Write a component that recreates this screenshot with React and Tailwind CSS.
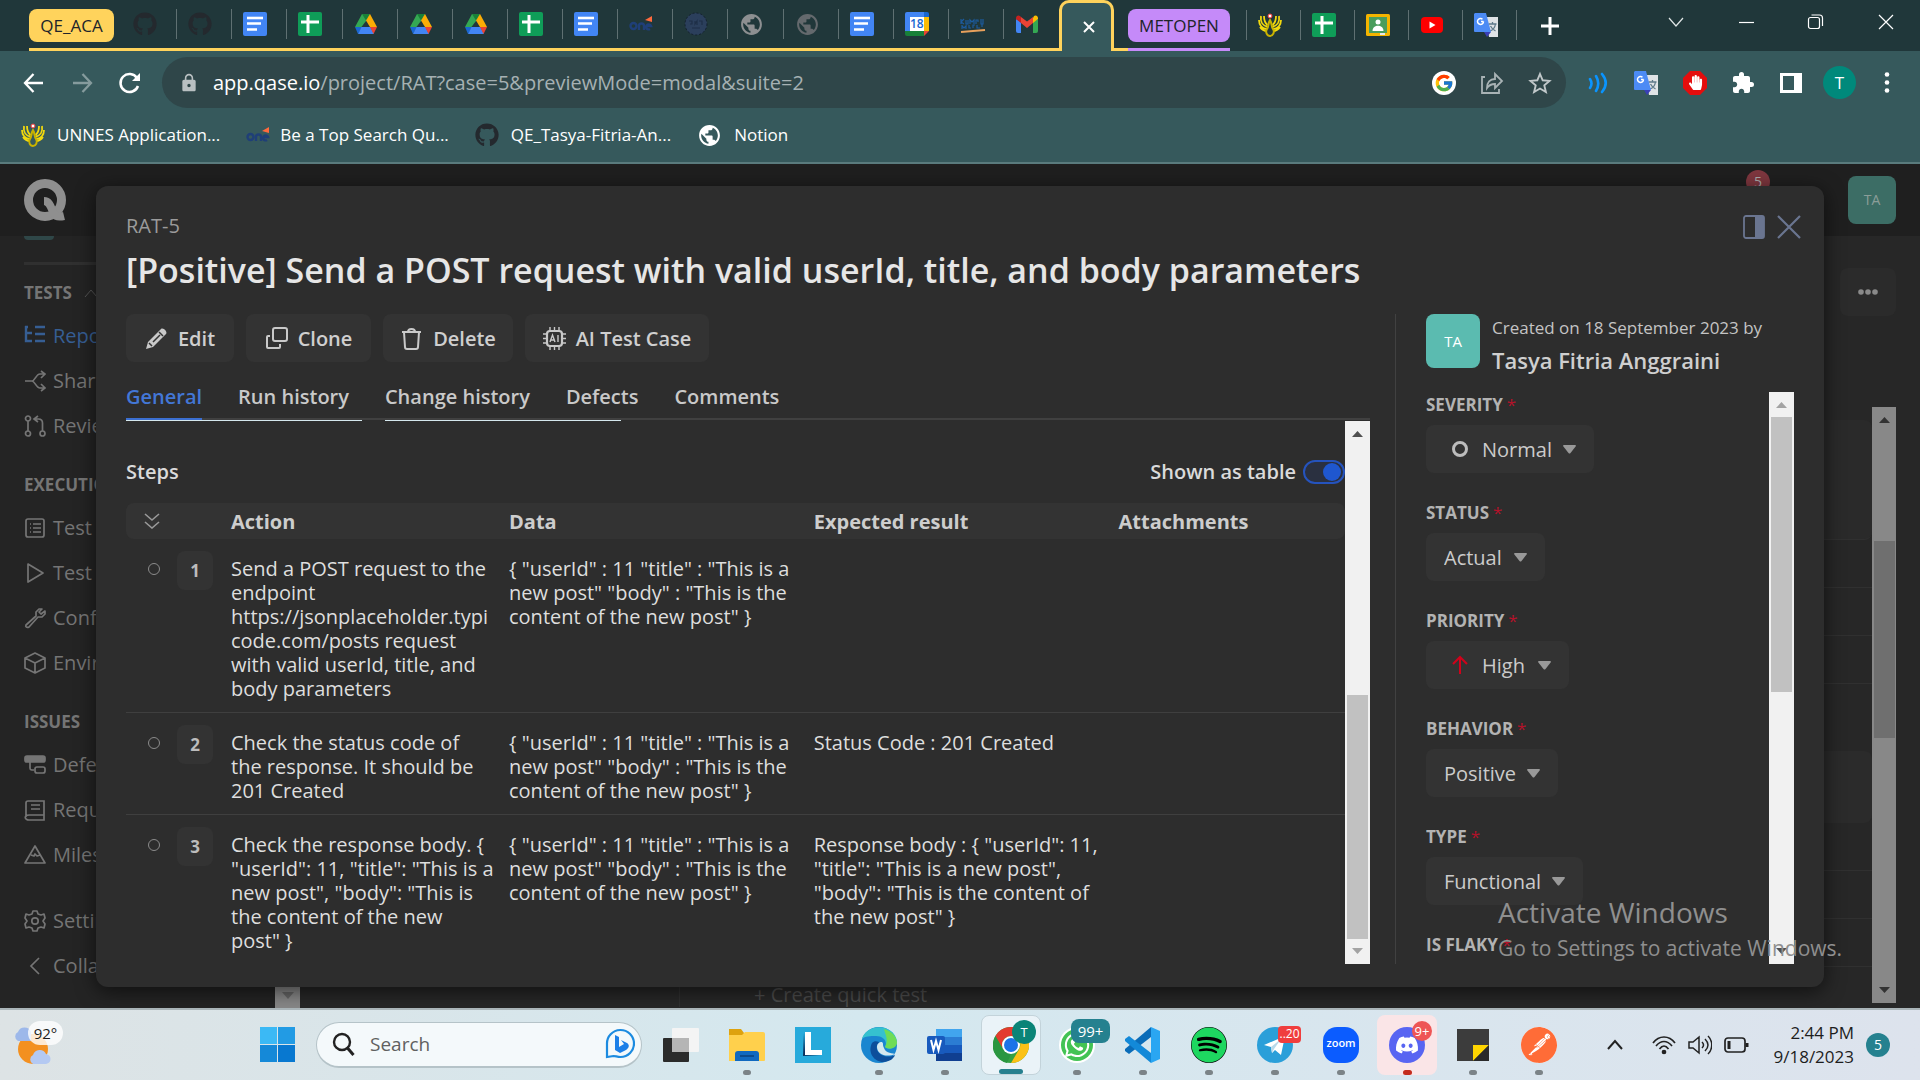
import React from "react";
import { FaGithub, FaSpotify, FaDiscord, FaWhatsapp, FaHandPaper } from "react-icons/fa";
import { FcGoogle } from "react-icons/fc";
import { MdPublic, MdExtension, MdLock } from "react-icons/md";
import { SiPostman } from "react-icons/si";

/* ---------- favicons ---------- */

const Docs = () => (
  <svg width="24" height="24" viewBox="0 0 24 24">
    <rect width="24" height="24" rx="2" fill="#4285f4" />
    <path d="M4 6h16" stroke="#fff" strokeWidth="2.6" />
    <path d="M4 11.500h14M4 17.500h10" stroke="#fff" strokeWidth="2.6" />
  </svg>
);
const Sheets = () => (
  <svg width="24" height="24" viewBox="0 0 24 24">
    <rect width="24" height="24" rx="2" fill="#0f9d58" />
    <path d="M3 10h18M10 3v18" stroke="#fff" strokeWidth="3" />
  </svg>
);
const Drive = () => (
  <svg width="24" height="24" viewBox="0 0 24 24">
    <path d="M8 2h8l-4 7-4.600 6L1 15z" fill="#34a853" />
    <path d="M8 2h8l-4 6.500z" fill="#188038" />
    <path d="M16 2l7 13h-7l-4-6.500z" fill="#fbad05" />
    <path d="M1 15h7l-4 7z" fill="#1967d2" />
    <path d="M7.500 15h9l3.500 7H4z" fill="#4285f4" />
    <path d="M16 15h7l-3.500 7z" fill="#ea4335" />
  </svg>
);
const One = () => (
  <svg width="24" height="24" viewBox="0 0 24 24" fill="none" stroke="#1f3f78" strokeWidth="2.400">
    <circle cx="4.500" cy="14" r="3" />
    <path d="M10 18v-4a2.500 2.500 0 015 0v4M17 14h5a2.500 2.500 0 10-1 3" />
    <path d="M16 8l7-4v6z" fill="#ff6a3d" stroke="none" />
  </svg>
);
const Seal = () => (
  <svg width="24" height="24" viewBox="0 0 24 24">
    <circle cx="12" cy="12" r="11" fill="#2b3f5c" stroke="#14202e" strokeDasharray="2 2" />
    <path d="M5 9h3v3H6m5-3v3l2-3v4m2-4h3v4M8 16h8" stroke="#1e2f47" fill="none" strokeWidth="1.200" />
  </svg>
);
const Calendar = () => (
  <span className="relative flex h-6 w-6 items-center justify-center">
    <svg className="absolute inset-0" width="24" height="24" viewBox="0 0 24 24">
      <path d="M2 0h17v5H5v14H0V2a2 2 0 012-2z" fill="#4285f4" />
      <path d="M19 0h3a2 2 0 012 2v3h-5z" fill="#1967d2" />
      <path d="M19 5h5v14h-5z" fill="#fbbc04" />
      <path d="M0 19h19v5H2a2 2 0 01-2-2z" fill="#188038" />
      <path d="M19 19h5l-5 5z" fill="#ea4335" />
      <path d="M5 5h14v14H5z" fill="#fff" />
    </svg>
    <span className="relative text-xs font-semibold text-[#1967d2]">18</span>
  </span>
);
const Kampus = () => (
  <svg width="26" height="24" viewBox="0 0 26 24" fill="none">
    <path d="M1 7v5m0-2l3-3m-3 3l3 2m2-4v4h2V8m2 4V8l2 2 2-2v4m2 0V8h2v2m3-3v5h2V7M2 13v4m0-3l2 2 2-2v3m3-4v3h2m2 0v-3h2m2 0v3h3m2-4v3" stroke="#1c5b9e" strokeWidth="1.200" />
    <path d="M1 20l24-2" stroke="#e8a05c" strokeWidth="2.200" />
  </svg>
);
const Gmail = () => (
  <svg width="24" height="24" viewBox="0 0 24 24">
    <path d="M1 7v12a2 2 0 002 2h3V10z" fill="#4285f4" />
    <path d="M23 7v12a2 2 0 01-2 2h-3V10z" fill="#34a853" />
    <path d="M18 6v5l5-4V6a2.500 2.500 0 00-4-2z" fill="#fbbc04" />
    <path d="M6 11L1 7V6a2.500 2.500 0 014-2l1 1z" fill="#c5221f" />
    <path d="M6 5l6 4.500L18 5v6l-6 5-6-5z" fill="#ea4335" />
  </svg>
);
const Unnes = () => (
  <svg width="24" height="24" viewBox="0 0 24 24" fill="none" stroke="#f2d90e" strokeWidth="1.800">
    <path d="M10 14C5 13 2 9 3 3M9 16C4 16 1 12 1 7M9 18c-3 0-5-1-7-4M9.500 12C7 10 6 7 6 3" />
    <path d="M14 14c5-1 8-5 7-11M15 16c5 0 8-4 8-9M15 18c3 0 5-1 7-4M14.500 12C17 10 18 7 18 3" />
    <path d="M12 7c-2 3-1 6-3 9s0 7 3 7 5-4 3-7-1-6-3-9z" stroke="#c9b300" strokeWidth="2" />
    <circle cx="12" cy="3" r="2" fill="#fff" stroke="#e33" strokeWidth="1" />
  </svg>
);
const Classroom = () => (
  <svg width="24" height="24" viewBox="0 0 24 24">
    <rect y="1" width="24" height="22" rx="1.500" fill="#f4b400" />
    <rect x="3" y="4" width="18" height="16" fill="#4a9d5c" />
    <circle cx="12" cy="9" r="2.500" fill="#fff" />
    <path d="M6.500 18c0-7 11-7 11 0z" fill="#fff" />
    <path d="M14 20h5v2h-5z" fill="#e8e8e8" />
  </svg>
);
const Youtube = () => (
  <svg width="24" height="24" viewBox="0 0 24 24">
    <rect x="1" y="4" width="22" height="16" rx="4" fill="#f00" />
    <path d="M9.500 8.500v7l6-3.500z" fill="#fff" />
  </svg>
);
const Translate = () => (
  <svg width="25" height="24" viewBox="0 0 25 24">
    <path d="M11 4h13v20H15z" fill="#dfe3e6" />
    <path d="M14.500 11h8M18.500 9v2M16 18c3-1 5-4 5.500-7M16.500 13c1 2 3 4 5 5" stroke="#5f7a8a" strokeWidth="1.300" fill="none" />
    <path d="M1 0h11l5 19H1a1 1 0 01-1-1V1z" fill="#4c8bf5" />
    <path d="M10 19h7l-4 5z" fill="#3a3fb5" />
    <path d="M9.500 8.500H7M9.500 8.500a3 3 0 11-1-2.300" stroke="#fff" strokeWidth="1.500" fill="none" />
  </svg>
);
const Github = () => <FaGithub className="h-6 w-6 text-[#24292e]" />;
const GlobeLight = () => <MdPublic className="h-[25px] w-[25px] text-[#8d8f91]" />;
const GlobeDim = () => <MdPublic className="h-[25px] w-[25px] text-[#64696d]" />;

const groupTabs = [Github, Github, Docs, Sheets, Drive, Drive, Drive, Sheets, Docs, One, Seal, GlobeLight, GlobeDim, Docs, Calendar, Kampus, Gmail];
const otherTabs = [Unnes, Sheets, Classroom, Youtube, Translate];

function BrowserTab({ Icon, last }) {
  return (
    <button aria-label="Tab" className="flex min-w-0 flex-1 items-center">
      <span className="flex flex-1 items-center pl-[11px]"><Icon /></span>
      {!last && <span className="h-[30px] w-px bg-[#5f7072]" />}
    </button>
  );
}

function Browser() {
  return (
    <header className="shrink-0 border-b-2 border-[#5a7b7d] bg-[#36595c] text-white">
      <div className="flex h-[51px] bg-[#20373a]">
        <div className="ml-[29px] flex min-w-0 flex-[1030_1_0] border-b-[3px] border-[#ffd35c]">
          <button className="mr-2 mt-[9px] h-[33px] w-[85px] shrink-0 rounded-lg bg-[#ffd35c] text-[17px] text-[#20242a]">QE_ACA</button>
          {groupTabs.map((I, i) => <BrowserTab key={i} Icon={I} last={i === groupTabs.length - 1} />)}
        </div>
        <div className="relative flex w-[55px] shrink-0 items-center justify-center rounded-t-[10px] border-x-[3px] border-t-[3px] border-[#ffd35c] bg-[#36595c] pl-1">
          <button aria-label="Close tab" className="flex h-5 w-5 items-center justify-center">
            <svg width="14" height="14" viewBox="0 0 14 14"><path d="M2 2l10 10M12 2L2 12" stroke="#fff" strokeWidth="2" /></svg>
          </button>
        </div>
        <div className="w-[14px] shrink-0 border-b-[3px] border-[#ffd35c]" />
        <div className="w-[102px] shrink-0 border-b-[3px] border-[#c58af9]">
          <button className="mt-[9px] h-[33px] w-full rounded-lg bg-[#c58af9] text-[17px] text-[#20242a]">METOPEN</button>
        </div>
        <div className="flex w-[287px] shrink-0 items-center pb-px pl-4">
          <span className="h-[30px] w-px bg-[#5f7072]" />
          {otherTabs.map((I, i) => <BrowserTab key={i} Icon={I} />)}
        </div>
        <div className="flex flex-[403_1_0] items-center">
          <button aria-label="New tab" className="ml-6 h-5 w-5">
            <svg width="18" height="18" viewBox="0 0 18 18"><path d="M9 0v18M0 9h18" stroke="#fff" strokeWidth="3" /></svg>
          </button>
          <div className="mb-2 ml-auto mr-6 flex items-center gap-[50px]">
            <button aria-label="Search tabs"><svg width="20" height="20" viewBox="0 0 20 20"><path d="M3 6l7 8 7-8" fill="none" stroke="#dfe6e6" strokeWidth="1.200" /></svg></button>
            <button aria-label="Minimize"><svg width="20" height="20" viewBox="0 0 20 20"><path d="M3 10.500h15" stroke="#fff" strokeWidth="1.200" /></svg></button>
            <button aria-label="Restore"><svg width="20" height="20" viewBox="0 0 20 20" fill="none" stroke="#fff" strokeWidth="1.200"><rect x="2.500" y="5.500" width="11" height="11" rx="2" /><path d="M5.500 3h8a3 3 0 013 3v8" /></svg></button>
            <button aria-label="Close"><svg width="20" height="20" viewBox="0 0 20 20"><path d="M3 3l14 14M17 3L3 17" stroke="#fff" strokeWidth="1.200" /></svg></button>
          </div>
        </div>
      </div>

      <div className="mt-[6px] flex h-[51px] items-center pl-[22px] pr-[21px]">
        <div className="flex w-[140px] shrink-0 items-center gap-6">
          <button aria-label="Back"><svg width="24" height="24" viewBox="0 0 24 24" fill="none" stroke="#fff" strokeWidth="2.300"><path d="M21 12H3M11.500 3L3 12l8.500 9" /></svg></button>
          <button aria-label="Forward"><svg width="24" height="24" viewBox="0 0 24 24" fill="none" stroke="#859b9d" strokeWidth="2.300"><path d="M3 12h18M12.500 3l8.500 9-8.500 9" /></svg></button>
          <button aria-label="Reload"><svg width="24" height="24" viewBox="0 0 24 24" fill="none" stroke="#fff" strokeWidth="2.500"><path d="M20 15a9 9 0 11-1-8l2 2" /><path d="M22 2v8h-8z" fill="#fff" stroke="none" /></svg></button>
        </div>
        <div className="flex h-full flex-1 items-center rounded-full bg-[#2f4649] pl-[17px] pr-[14px]">
          <MdLock className="h-5 w-5 text-[#b9c0c2]" />
          <label htmlFor="url" className="ml-[14px] text-[20px]">app.qase.io</label>
          <input id="url" aria-label="Address" defaultValue="/project/RAT?case=5&previewMode=modal&suite=2" className="min-w-0 flex-1 bg-transparent text-[20px] text-[#a6b1b3] outline-none" />
          <div className="flex items-center gap-6">
            <button aria-label="Google" className="flex h-6 w-6 items-center justify-center rounded-full bg-white"><FcGoogle className="h-5 w-5" /></button>
            <button aria-label="Share"><svg width="24" height="24" viewBox="0 0 24 24" fill="none" stroke="#a9b3b5" strokeWidth="1.800"><path d="M5 6H2v16h17v-4" /><path d="M7 17c0-6 3-9 8-9V3l7 7-7 7v-4c-4 0-6 1-8 4z" /></svg></button>
            <button aria-label="Bookmark"><svg width="24" height="24" viewBox="0 0 24 24" fill="none" stroke="#c1c8ca" strokeWidth="1.900"><path d="M12 3l2.700 6.300 6.800.600-5.200 4.500 1.600 6.700-5.900-3.600-5.900 3.600 1.600-6.700L2.500 9.900l6.800-.600z" /></svg></button>
          </div>
        </div>
        <div className="ml-5 flex items-center gap-6">
          <button aria-label="Audio"><svg width="24" height="24" viewBox="0 0 24 24" fill="none" stroke="#0a94ff" strokeWidth="2.600" strokeLinecap="round"><path d="M4 8c2 3 2 6 0 9M10 5c3 5 3 10 0 15M16 3c5 6 5 12 0 18" /></svg></button>
          <button aria-label="Translate"><Translate /></button>
          <button aria-label="AdBlock"><svg width="24" height="24" viewBox="0 0 24 24"><path d="M7 0h10l7 7v10l-7 7H7l-7-7V7z" fill="#e40d0d" /><g transform="translate(5 4)"><FaHandPaper size={15} color="#fff" /></g></svg></button>
          <button aria-label="Extensions"><MdExtension className="h-6 w-6" /></button>
          <button aria-label="Side panel"><svg width="24" height="24" viewBox="0 0 24 24"><path d="M1 2h22v20H1zM4 5v14h11V5z" fill="#fff" fillRule="evenodd" /></svg></button>
          <button className="-ml-1 -mr-[5px] h-[33px] w-[33px] rounded-full bg-[#00897b] text-[17px]">T</button>
          <button aria-label="Menu"><svg width="24" height="24" viewBox="0 0 24 24" fill="#fff"><circle cx="12" cy="3.500" r="2.300" /><circle cx="12" cy="11.500" r="2.300" /><circle cx="12" cy="19.500" r="2.300" /></svg></button>
        </div>
      </div>

      <nav className="flex h-[54px] items-center gap-[26px] pl-[21px] text-[17px]">
        <a href="#unnes" className="flex items-center gap-3"><Unnes />UNNES Application...</a>
        <a href="#search" className="flex items-center gap-[10px]"><One />Be a Top Search Qu...</a>
        <a href="#repo" className="flex items-center gap-3"><Github />QE_Tasya-Fitria-An...</a>
        <a href="#notion" className="flex items-center gap-3"><MdPublic className="h-[25px] w-[25px]" />Notion</a>
      </nav>
    </header>
  );
}

/* ---------- page behind the dialog ---------- */

const sideIcons = {
  repo: <path d="M2 1v15h5M2 8h5M11 2h10M11 9h10M11 16h10M6 8h2M6 16h2M1 2h3" strokeWidth="2.400" />,
  share: <path d="M1 11h7c3 0 4-7 8-7h4M17 1l4 3-4 4M8 11c3 0 4 7 8 7h4M17 14l4 4-4 3" />,
  review: <><circle cx="4" cy="3.500" r="2.500" /><circle cx="4" cy="18.500" r="2.500" /><circle cx="18.500" cy="18.500" r="2.500" /><path d="M4 6v10M18.500 16V8c0-3-2-4-4-4h-3M14 1l-4 3 4 3" /></>,
  plans: <><rect x="2" y="2" width="18" height="18" rx="2" /><path d="M6 7h1M9 7h8M6 11h1M9 11h8M6 15h1M9 15h8" /></>,
  play: <path d="M4 2l15 9-15 9z" strokeLinejoin="round" />,
  wrench: <path d="M15 2l-3 3v4l-10 9c-1 2 1 3 3 2l9-10h4l3-3V4l-4 3-2-2 3-3z" strokeLinejoin="round" />,
  box: <path d="M11 1l10 5v10l-10 5L1 16V6zM1 6l10 5 10-5M11 11v10" strokeLinejoin="round" />,
  defects: <><rect x="1" y="2" width="20" height="6" rx="2" fill="currentColor" /><path d="M6 8v6c0 2 1 2 4 2" /><rect x="11" y="13" width="10" height="6" rx="2" /></>,
  book: <path d="M20 16H5a3 2 0 000 5h15V2H4a2 2 0 00-2 2v14M7 6h9M7 10h9" />,
  mile: <path d="M11 2l10 17H1zM7 11l3 1 1-2 2 2 3-1" strokeLinejoin="round" />,
  gear: <><circle cx="11" cy="11" r="3.200" /><path d="M9 1h4l1 3 3 1 3-1 1 4-2 3 2 3-1 4-3-1-3 1-1 3H9l-1-3-3-1-3 1-1-4 2-3-2-3 1-4 3 1 3-1z" strokeLinejoin="round" /></>,
  left: <path d="M15 3l-8 8 8 8" />,
};

function SideItem({ icon, active, children, className = "h-[45px]" }) {
  return (
    <a href="#side" className={`flex items-center gap-[7px] ${className} ${active ? "text-[#365e93]" : "text-[#757575]"}`}>
      <svg width="22" height="22" viewBox="0 0 22 22" fill="none" stroke="currentColor" strokeWidth="1.700">{sideIcons[icon]}</svg>
      {children}
    </a>
  );
}

function Backdrop() {
  return (
    <>
      <div className="flex h-[72px] items-center justify-between bg-[#1f1f1f] pl-6 pr-6">
        <svg width="42" height="43" viewBox="0 0 42 43" fill="none" stroke="#8f8f8f">
          <circle cx="21" cy="21" r="16.500" strokeWidth="9" />
          <path d="M20 22c6 0 7 7 10 13 2 3 6 3 10 2" strokeWidth="8" />
        </svg>
        <div className="flex items-start gap-[78px]">
          <span className="-mt-[6px] flex h-6 w-6 items-center justify-center rounded-full bg-[#7f373f] text-sm text-[#aaa]">5</span>
          <button className="h-12 w-12 rounded-lg bg-[#3c6d65] text-[14px] text-[#8b9d99]">TA</button>
        </div>
      </div>
      <div className="flex min-h-0 flex-1">
        <nav className="w-[300px] shrink-0 bg-[#242424] pl-6 text-[20px]">
          <div className="h-1 w-[30px] rounded-b-lg bg-[#2f4748]" />
          <div className="mt-[22px] h-[3px] bg-[#303030]" />
          <div className="flex h-12 items-center gap-3 pt-2 text-[17px] font-bold text-[#757575]">TESTS <svg width="14" height="8" viewBox="0 0 14 8" fill="none" stroke="#555"><path d="M1 8l6-7 6 7" /></svg></div>
          <SideItem icon="repo" active>Repository</SideItem>
          <SideItem icon="share">Shared steps</SideItem>
          <SideItem icon="review">Reviews</SideItem>
          <div className="flex h-[57px] items-end pb-2 text-[17px] font-bold text-[#757575]">EXECUTION</div>
          <SideItem icon="plans">Test Plans</SideItem>
          <SideItem icon="play">Test Runs</SideItem>
          <SideItem icon="wrench">Configurations</SideItem>
          <SideItem icon="box">Environments</SideItem>
          <div className="flex h-[57px] items-end pb-2 text-[17px] font-bold text-[#757575]">ISSUES</div>
          <SideItem icon="defects">Defects</SideItem>
          <SideItem icon="book">Requirements</SideItem>
          <SideItem icon="mile">Milestones</SideItem>
          <SideItem icon="gear" className="mt-[21px] h-[45px]">Settings</SideItem>
          <SideItem icon="left">Collapse</SideItem>
        </nav>
        <div className="flex min-w-0 flex-1 flex-col bg-[#272727] pr-6">
          <div className="mt-8 flex justify-end">
            <button className="flex h-12 w-14 items-center justify-center rounded-lg bg-[#2b2b2b]" aria-label="More">
              <svg width="20" height="6" viewBox="0 0 20 6" fill="#8a8a8a"><circle cx="3" cy="3" r="2.800" /><circle cx="10" cy="3" r="2.800" /><circle cx="17" cy="3" r="2.800" /></svg>
            </button>
          </div>
          <div className="mb-[5px] mt-[91px] flex min-h-0 flex-1">
            <div className="mt-[13px] min-w-0 flex-1">
              <div className="h-[120px] rounded-r-lg border-b border-[#303030] bg-[#2a2a2a]" />
              <div className="h-12 border-b border-[#303030]" />
              <div className="h-12 border-b border-[#303030]" />
              <div className="h-12 border-b border-[#303030]" />
              <div className="mt-[67px] h-[72px] rounded-lg bg-[#2b2b2b]" />
              <div className="h-12 border-b border-[#303030]" />
              <div className="h-12 border-b border-[#303030]" />
              <div className="h-12 border-b border-[#303030]" />
              <div className="ml-[379px] h-10 border-l border-[#303030] pl-[74px] pt-[13px] text-[20px] leading-[30px] text-[#4b4b4b]">+ Create quick test</div>
            </div>
            <Scrollbar className="w-6 bg-[#888]" before="h-[109px]" thumb="h-[197px] bg-[#6f6f6f]" up="#333" down="#333" />
          </div>
        </div>
      </div>
    </>
  );
}

function Scrollbar({ className, before, thumb, up = "#505050", down = "#505050" }) {
  return (
    <div aria-hidden="true" className={`flex shrink-0 flex-col items-center ${className}`}>
      <svg className="shrink-0" width="25" height="25" viewBox="0 0 25 25"><path d="M7 16l5.500-6 5.500 6z" fill={up} /></svg>
      <div className={before} />
      <div className={`w-[21px] ${thumb}`} />
      <svg className="mt-auto shrink-0" width="25" height="25" viewBox="0 0 25 25"><path d="M7 9l5.500 6L18 9z" fill={down} /></svg>
    </div>
  );
}

/* ---------- dialog ---------- */

const actionIcons = {
  edit: <><path d="M1 22l2-7L16 2c2-2 7 3 5 5L8 20z" fill="#c9c9c9" stroke="none" /><path d="M8 15l7-7M14 5l4 4M4 16l3 3" stroke="#333" strokeWidth="1.500" /></>,
  clone: <><rect x="8" y="1" width="14" height="13" rx="2" /><path d="M5 9H3a1 1 0 00-1 1v10a1 1 0 001 1h11a1 1 0 001-1v-3" /></>,
  trash: <path d="M2 5h19M8 5c0-4 7-4 7 0M4 5l1 15a2 2 0 002 2h9a2 2 0 002-2l1-15" />,
  ai: <><rect x="4" y="4" width="15" height="15" rx="3" strokeWidth="2.200" /><path d="M7 0v4M11.500 0v4M16 0v4M7 19v4M11.500 19v4M16 19v4M0 7h4M0 11.500h4M0 16h4M19 7h4M19 11.500h4M19 16h4" strokeWidth="1.400" /><path d="M7 15l2.500-7L12 15M8 13h3M15 8v7" strokeWidth="1.400" /></>,
};

function Action({ icon, children, className }) {
  return (
    <button className={`flex h-12 items-center justify-center gap-[10px] rounded-lg bg-[#333333] pt-[2px] font-semibold text-[#cfcfcf] ${className}`}>
      <svg className="-mt-[2px]" width="23" height="23" viewBox="0 0 23 23" fill="none" stroke="#c9c9c9" strokeWidth="2">{actionIcons[icon]}</svg>
      {children}
    </button>
  );
}

const DATA = '{ "userId" : 11 "title" : "This is a\nnew post" "body" : "This is the\ncontent of the new post" }';
const steps = [
  { action: "Send a POST request to the\nendpoint\nhttps://jsonplaceholder.typi\ncode.com/posts request\nwith valid userId, title, and\nbody parameters", data: DATA, expected: "" },
  { action: "Check the status code of\nthe response. It should be\n201 Created", data: DATA, expected: "Status Code : 201 Created" },
  { action: 'Check the response body. {\n"userId": 11, "title": "This is a\nnew post", "body": "This is\nthe content of the new\npost" }', data: DATA, expected: 'Response body : { "userId": 11,\n"title": "This is a new post",\n"body": "This is the content of\nthe new post" }' },
];

function Steps() {
  return (
    <table className="w-full table-fixed text-left text-[#dedede]">
      <colgroup>
        <col className="w-[51px]" /><col className="w-[54px]" /><col className="w-[278px]" /><col className="w-[25%]" /><col className="w-[25%]" /><col />
      </colgroup>
      <thead>
        <tr className="h-9 bg-[#333333] text-[#cdcdcd]">
          <th className="rounded-l-lg"><button aria-label="Expand all" className="mx-auto block">
            <svg width="16" height="16" viewBox="0 0 16 16" fill="none" stroke="#999" strokeWidth="1.600"><path d="M1 1l7 6 7-6M1 9l7 6 7-6" /></svg>
          </button></th>
          <th aria-label="Number" /><th className="pt-[2px]">Action</th><th className="pt-[2px]">Data</th><th className="pt-[2px]">Expected result</th><th className="rounded-r-lg pt-[2px]">Attachments</th>
        </tr>
      </thead>
      <tbody>
        {steps.map((s, i) => (
          <tr key={i} className="border-b border-[#3f3f3f] align-top leading-6 last:border-b-0">
            <td className="pt-6"><span className="ml-[22px] block h-3 w-3 rounded-full border-[1.5px] border-[#8b8b8b]" /></td>
            <td className="pt-3"><span className="flex h-[39px] w-9 items-center justify-center rounded-lg bg-[#333333] text-[17px] font-bold text-[#bcbcbc]">{i + 1}</span></td>
            <td className="whitespace-pre pb-[11px] pt-[18px]">{s.action}</td>
            <td className="whitespace-pre pt-[18px]">{s.data}</td>
            <td className="whitespace-pre pt-[18px]">{s.expected}</td>
            <td />
          </tr>
        ))}
      </tbody>
    </table>
  );
}

function Field({ label, value, width, icon }) {
  const id = label.toLowerCase().replace(" ", "-");
  return (
    <div className="h-[108px] shrink-0">
      <label htmlFor={id} className="flex h-[33px] items-center pb-2 text-[17px] font-bold text-[#b3b3b3]">{label}<span className="ml-1 font-normal text-[#b3122a]">*</span></label>
      {value && (
        <div className={`relative h-12 ${width}`}>
          {icon && <span className="absolute left-6 top-3">{icon}</span>}
          <select id={id} defaultValue={value} className={`h-12 w-full appearance-none rounded-lg bg-[#333333] pt-[2px] text-[#cbcbcb] ${icon ? "pl-14" : "pl-[18px]"}`}>
            <option>{value}</option>
          </select>
          <svg className="pointer-events-none absolute right-[18px] top-5" width="13" height="10" viewBox="0 0 13 10"><path d="M0 1q0-1 1-1h11q1 0 1 1L7.500 8q-1 1-2 0z" fill="#999" /></svg>
        </div>
      )}
    </div>
  );
}

const tabLine = "after:absolute after:left-0 after:h-px after:bg-[#d5e8ee]";

function Dialog() {
  return (
    <section role="dialog" aria-label="Test case RAT-5" className="absolute inset-x-24 bottom-[21px] top-[22px] flex flex-col rounded-xl bg-[#2d2d2d] pb-[23px] pl-[30px] pr-[30px] pt-[25px] shadow-[0_4px_20px_rgba(0,0,0,0.6)]">
      <div className="flex items-start justify-between">
        <div>
          <div className="h-[30px] leading-[30px] text-[#9b9b9b]">RAT-5</div>
          <h1 className="whitespace-nowrap text-[34px] font-semibold leading-[58px] text-[#e6e6e6]">[Positive] Send a POST request with valid userId, title, and body parameters</h1>
        </div>
        <div className="-mr-[7px] flex gap-3 pt-1">
          <button aria-label="Side view"><svg width="22" height="24" viewBox="0 0 22 24"><rect x="1" y="1" width="20" height="22" rx="2" fill="none" stroke="#6a7590" strokeWidth="1.800" /><path d="M12 1h9v22h-9z" fill="#6a7590" /></svg></button>
          <button aria-label="Close dialog"><svg width="24" height="24" viewBox="0 0 24 24"><path d="M1 1l22 22M23 1L1 23" stroke="#6a7590" strokeWidth="2.200" /></svg></button>
        </div>
      </div>

      <div className="mt-[15px] flex min-h-0 flex-1">
        <div className="flex min-w-0 flex-1 flex-col">
          <div className="flex gap-3">
            <Action icon="edit" className="w-[108px]">Edit</Action>
            <Action icon="clone" className="w-[125px]">Clone</Action>
            <Action icon="trash" className="w-[130px]">Delete</Action>
            <Action icon="ai" className="w-[184px]">AI Test Case</Action>
          </div>
          <div role="tablist" className="mt-3 flex h-[46px] shrink-0 gap-[36px] border-b-2 border-[#404040] font-semibold text-[#c9c9c9]">
            <button role="tab" aria-selected="true" className={`relative -mb-[2px] border-b-2 border-[#3b6fd1] pt-[2px] text-[#4377d6] ${tabLine} after:top-[calc(100%+2px)] after:w-[236px]`}>General</button>
            <button role="tab" className="pt-[2px]">Run history</button>
            <button role="tab" className={`relative -mb-[2px] pb-[2px] pt-[2px] ${tabLine} after:top-full after:w-[236px]`}>Change history</button>
            <button role="tab" className="pt-[2px]">Defects</button>
            <button role="tab" className="pt-[2px]">Comments</button>
          </div>
          <div className="mt-px flex min-h-0 flex-1">
            <div className="min-w-0 flex-1 overflow-hidden">
              <div className="flex h-[82px] items-center justify-between pt-5 font-semibold text-[#dadada]">
                <h2>Steps</h2>
                <label className="flex items-center gap-[7px]">Shown as table
                  <input type="checkbox" role="switch" defaultChecked className="relative h-6 w-[42px] appearance-none rounded-full border-2 border-[#2553bd] bg-[#2a3040] before:absolute before:right-[2px] before:top-px before:h-[18px] before:w-[18px] before:rounded-full before:bg-[#1f57cf]" />
                </label>
              </div>
              <Steps />
            </div>
            <Scrollbar className="w-[25px] bg-[#f1f1f1]" before="h-[249px]" thumb="h-[244px] bg-[#c1c1c1]" down="#a3a3a3" />
          </div>
        </div>

        <aside className="ml-[25px] flex w-[399px] shrink-0 flex-col border-l border-[#414141] pl-[30px]">
          <div className="flex h-[78px] shrink-0 gap-3">
            <div className="flex h-[54px] w-[54px] items-center justify-center rounded-lg bg-[#5bbbb0] text-[15px] text-white">TA</div>
            <div className="whitespace-nowrap">
              <div className="text-[17px] leading-[28px] text-[#c4c4c4]">Created on 18 September 2023 by</div>
              <div className="text-[22px] font-semibold leading-[37px] text-[#cfcfcf]">Tasya Fitria Anggraini</div>
            </div>
          </div>
          <div className="flex min-h-0 flex-1">
            <div className="flex min-w-0 flex-1 flex-col overflow-hidden">
              <Field label="SEVERITY" value="Normal" width="w-[168px]" icon={<svg width="20" height="24" viewBox="0 0 20 24"><circle cx="10" cy="12" r="6.500" fill="none" stroke="#bdbdbd" strokeWidth="3" /></svg>} />
              <Field label="STATUS" value="Actual" width="w-[119px]" />
              <Field label="PRIORITY" value="High" width="w-[143px]" icon={<svg width="20" height="24" viewBox="0 0 20 24" fill="none" stroke="#d0021b" strokeWidth="2"><path d="M10 21V4M3 11l7-7 7 7" /></svg>} />
              <Field label="BEHAVIOR" value="Positive" width="w-[132px]" />
              <Field label="TYPE" value="Functional" width="w-[157px]" />
              <Field label="IS FLAKY" />
            </div>
            <Scrollbar className="w-[25px] bg-[#f1f1f1]" before="h-0" thumb="h-[275px] bg-[#c1c1c1]" up="#a3a3a3" />
          </div>
        </aside>
      </div>
    </section>
  );
}

/* ---------- taskbar ---------- */

const apps = {
  view: <><rect y="11" width="26" height="24" rx="1" fill="#2b2b2b" /><rect x="9" y="1" width="27" height="24" rx="1" fill="#f4f4f4" /><path d="M9 11h17v14H9z" fill="#b5b5b5" /></>,
  files: <><path d="M0 2h12l3 4h19v10H0z" fill="#dea20e" /><path d="M0 8h13l3-3h18a2 2 0 012 2v26a1 1 0 01-1 1H0z" fill="#ffd04c" /><path d="M6 34v-7a3 3 0 013-3h18a3 3 0 013 3v7z" fill="#1069c0" /><path d="M11 29h14" stroke="#0b4a8c" strokeWidth="2" /></>,
  lapp: <><path d="M0 0h36v36H0z" fill="#27aadb" /><path d="M9 6l-1 23 18-1-16-3z" fill="#0b2f5c" /><path d="M10 5h6v18h11v5H10z" fill="#fff" /></>,
  edge: <><circle cx="18" cy="18" r="18" fill="#1a86d0" /><path d="M1 12C5-4 33-4 36 14c0 8-9 9-12 6 3-6-2-11-9-11-6 0-11 0-14 3z" fill="#35c1cf" /><path d="M23 2c8 2 13 8 13 14-1 6-8 7-12 4 4-7 0-13-1-18z" fill="#6fdc57" /><path d="M11 16c-5 10 3 19 11 19 7 0 11-4 12-7-8 4-17 0-18-6-1-3 1-5 2-7-3-1-5-1-7 1z" fill="#0d4f9b" /><path d="M16 20c0 7 9 11 18 7-5-1-10-2-11-6-2-4 0-4-2-6-3 0-5 2-5 5z" fill="#d5e8ef" /></>,
  word: <><path d="M9 2h26v9H9z" fill="#41a5ee" /><path d="M9 10h26v8H9z" fill="#2b7cd3" /><path d="M9 18h26v8H9z" fill="#185abd" /><path d="M9 26h26v8H9z" fill="#103f91" /><rect y="9" width="18" height="18" rx="2" fill="#185abd" /><path d="M4 13l2.500 10L9 14l2.500 9L14 13" stroke="#fff" strokeWidth="2" fill="none" /></>,
  chrome: <><circle cx="18" cy="18" r="18" fill="#34a144" /><path d="M2.400 9A18 18 0 0133.600 9H18a9 9 0 00-8 13z" fill="#e33b2e" /><path d="M33.600 9A18 18 0 0118 36l8-13.500A9 9 0 0018 9z" fill="#fbc116" /><path d="M2.400 9L10 22.500 18 27l-4 9A18 18 0 012.400 9z" fill="#2a9640" /><circle cx="18" cy="18" r="9" fill="#fff" /><circle cx="18" cy="18" r="7" fill="#1a73e8" /></>,
  vscode: <><path d="M26 0l9 4v28l-9 4z" fill="#2aa6f2" /><path d="M26 0v10L4 27l-4-3v-2z" fill="#0a6cb8" /><path d="M26 36V26L4 9l-4 3v2z" fill="#1389d8" /></>,
  telegram: <><circle cx="18" cy="18" r="18" fill="#2a9fd9" /><path d="M7 18l21-9-4 19-6-5-3 3-1-6z" fill="#fff" /><path d="M14 20l10-8-7 10-2 4z" fill="#b9d9ea" /></>,
  sticky: <><path d="M2 2h32v32H2z" fill="#3c3c3c" /><path d="M18 18h16L18 34z" fill="#ffd500" /><path d="M34 18v16H18z" fill="#2a2a2a" /></>,
};

function TaskApp({ label, art, children, dot = "w-2 bg-[#7b8387]", box = "" }) {
  return (
    <button aria-label={label} className={`relative flex h-[60px] w-[60px] items-center justify-center rounded-lg ${box}`}>
      {art && <svg width="36" height="36" viewBox="0 0 36 36">{apps[art]}</svg>}
      {children}
      {dot && <span className={`absolute bottom-0 h-[5px] rounded-full ${dot}`} />}
    </button>
  );
}

function Taskbar() {
  return (
    <footer className="flex h-[72px] shrink-0 items-center border-t-2 border-[#aab5b9] bg-linear-to-r from-[#dde3e5] via-[#d4e8ef] via-45% to-[#dde3ed] pb-px text-[#1d1d1d]">
      <button aria-label="Weather" className="relative ml-[15px] mr-[197px] h-12 w-12 shrink-0">
        <svg width="48" height="48" viewBox="0 0 48 48"><circle cx="18" cy="28" r="15" fill="#f39020" /><path d="M3 20a5 5 0 010-9 7 7 0 0113 0v9z" fill="#9db8ea" /><path d="M18 43a5 5 0 010-9 7 7 0 0113-1c6 1 6 9 0 10z" fill="#b4c9f2" /></svg>
        <span className="absolute right-0 top-0 flex h-6 w-[35px] items-center justify-center rounded-full bg-white/80 text-[15px]">92°</span>
      </button>
      <button aria-label="Start" className="shrink-0"><svg width="35" height="35" viewBox="0 0 35 35"><path d="M0 0h17v17H0z" fill="#3bb9f5" /><path d="M18 0h17v17H18z" fill="#229be4" /><path d="M0 18h17v17H0z" fill="#1589d8" /><path d="M18 18h17v17H18z" fill="#0878d0" /></svg></button>
      <div className="ml-[21px] mr-[6px] flex h-[46px] w-[326px] shrink-0 items-center rounded-full border border-b-2 border-[#b5c3c8] bg-[#f4f9fb] pl-[15px] pr-[6px]">
        <svg width="24" height="24" viewBox="0 0 24 24" fill="none" stroke="#222" strokeWidth="2.400"><circle cx="10" cy="10" r="8" /><path d="M15.500 16l6 7" strokeWidth="3" /></svg>
        <input aria-label="Search" placeholder="Search" className="ml-[14px] min-w-0 flex-1 bg-transparent text-[19px] outline-none placeholder:text-[#606060]" />
        <svg width="30" height="32" viewBox="0 0 30 32" fill="none"><path d="M2 29V16a13.500 13.500 0 1113.500 13c-3 0-5-1-7-1z" stroke="#1c8be0" strokeWidth="2.200" /><path d="M10 7l4 2v10l5-3-3-4 6 3c3 2 2 5-1 7l-6 3-5-3z" fill="#1b7fe8" /></svg>
      </div>
      <div className="flex shrink-0 gap-[6px] pl-[3px]">
        <TaskApp label="Task view" art="view" dot="" />
        <TaskApp label="File Explorer" art="files" />
        <TaskApp label="L" art="lapp" dot="" />
        <TaskApp label="Edge" art="edge" />
        <TaskApp label="Word" art="word" />
        <TaskApp label="Chrome" art="chrome" box="border border-[#c3d3da] bg-[#eaf3f8]" dot="w-6 bg-[#27808f]">
          <span className="absolute right-1 top-1 flex h-6 w-6 items-center justify-center rounded-full bg-[#0b8477] text-[13px] text-white">T</span>
        </TaskApp>
        <TaskApp label="WhatsApp">
          <span className="flex h-9 w-9 items-center justify-center rounded-full bg-white"><span className="flex h-8 w-8 items-center justify-center rounded-full bg-[#43c354]"><FaWhatsapp className="h-7 w-7 text-white" /></span></span>
          <span className="absolute -right-[3px] top-1 flex h-6 w-[39px] items-center justify-center rounded-lg bg-[#25818f] text-[15px] text-white">99+</span>
        </TaskApp>
        <TaskApp label="VS Code" art="vscode" />
        <TaskApp label="Spotify"><span className="rounded-full bg-black"><FaSpotify className="h-9 w-9 text-[#1ed760]" /></span></TaskApp>
        <TaskApp label="Telegram" art="telegram">
          <span className="absolute right-1 top-[11px] flex h-[17px] w-[23px] items-center justify-center rounded bg-[#f03e3e] text-xs text-white">..20</span>
        </TaskApp>
        <TaskApp label="Zoom"><span className="flex h-9 w-9 items-center justify-center rounded-[14px] bg-[#0b5cff] pb-1 text-[11px] font-semibold text-white">zoom</span></TaskApp>
        <TaskApp label="Discord" box="bg-[#fae5e7]" dot="w-[9px] bg-[#c42b1c]">
          <span className="flex h-9 w-9 items-center justify-center rounded-full bg-[#5865f2]"><FaDiscord className="h-6 w-6 text-white" /></span>
          <span className="absolute right-[5px] top-[6px] flex h-5 w-5 items-center justify-center rounded-full bg-[#ee5555] text-[13px] text-white">9+</span>
        </TaskApp>
        <TaskApp label="Sticky Notes" art="sticky" />
        <TaskApp label="Postman"><span className="rounded-full bg-white"><SiPostman className="h-9 w-9 text-[#ff6c37]" /></span></TaskApp>
      </div>
      <div className="ml-auto mr-[30px] flex items-center">
        <button aria-label="Hidden icons" className="mr-7"><svg width="18" height="18" viewBox="0 0 18 18" fill="none" stroke="#222" strokeWidth="2"><path d="M2 13l7-8 7 8" /></svg></button>
        <button aria-label="System" className="mr-6 flex items-center gap-3">
          <svg width="24" height="20" viewBox="0 0 24 20" fill="none" stroke="#222" strokeWidth="1.700"><path d="M1 8c6-8 16-8 22 0M4 11c5-6 11-6 16 0M7.500 14c3-4 6-4 9 0" /><circle cx="12" cy="17" r="1.500" fill="#222" /></svg>
          <svg width="24" height="20" viewBox="0 0 24 20" fill="none" stroke="#222" strokeWidth="1.500"><path d="M1 7v6h4l6 5V2L5 7zM14 7c2 2 2 4 0 6M17 4c4 4 4 8 0 12M20 1c5 5 5 13 0 18" /></svg>
          <svg width="25" height="18" viewBox="0 0 25 18" fill="none" stroke="#222" strokeWidth="1.700"><rect x="1" y="2" width="20" height="14" rx="3" /><path d="M5 5v8M23 7v4" strokeWidth="3" /></svg>
        </button>
        <div className="mr-3 text-right text-[17px] leading-6"><div>2:44 PM</div><div>9/18/2023</div></div>
        <span className="flex h-6 w-6 items-center justify-center rounded-full bg-[#25818f] text-[14px] text-white">5</span>
      </div>
    </footer>
  );
}

export default function App() {
  return (
    <div className="flex h-screen flex-col overflow-hidden bg-[#272727] font-['Open_Sans',sans-serif] text-[20px] leading-6">
      <Browser />
      <main className="relative flex min-h-0 flex-1 flex-col overflow-hidden">
        <Backdrop />
        <div aria-hidden="true" className="absolute bottom-0 left-[275px] flex h-[21px] w-[25px] justify-center bg-[#888] pt-[5px]">
          <svg width="12" height="7" viewBox="0 0 12 7"><path d="M0 0h12L6 7z" fill="#666" /></svg>
        </div>
        <Dialog />
        <div className="pointer-events-none absolute bottom-11 right-[79px] w-[343px] whitespace-nowrap text-[#8f8f8f]">
          <div className="text-[28px] leading-[40px]">Activate Windows</div>
          <div className="text-[21px] leading-[32px]">Go to Settings to activate Windows.</div>
        </div>
      </main>
      <Taskbar />
    </div>
  );
}
